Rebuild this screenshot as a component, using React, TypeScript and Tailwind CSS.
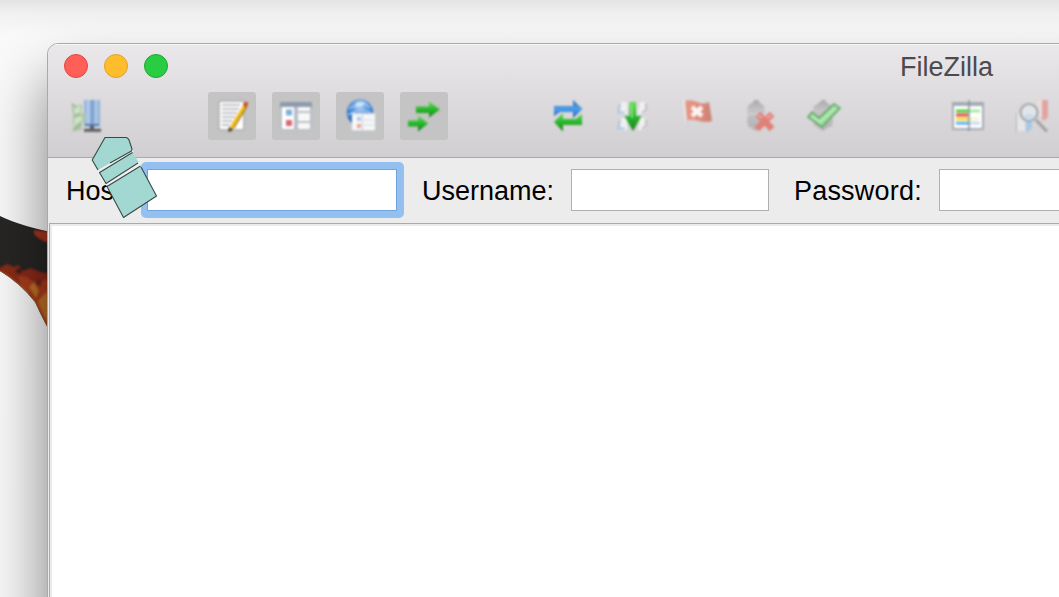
import type { ReactNode } from "react";

function Tool({ label, active = false, children }: { label: string; active?: boolean; children?: ReactNode }) {
  return (
    <button
      aria-label={label}
      className={active ? "h-12 w-12 shrink-0 rounded-[3px] bg-[#c4c4c4]" : "h-12 w-12 shrink-0"}
    >
      <svg viewBox="0 0 48 48" className="h-12 w-12 blur-[0.9px]">
        {children}
      </svg>
    </button>
  );
}

function Gap() {
  return <div className="w-16 shrink-0" />;
}

function Gradients() {
  return (
    <svg className="absolute h-0 w-0">
      <defs>
        <linearGradient id="green" x1="0" y1="0" x2="0" y2="1">
          <stop offset="0" stopColor="#5fdc50" />
          <stop offset="0.5" stopColor="#27b82b" />
          <stop offset="1" stopColor="#1d7d20" />
        </linearGradient>
        <linearGradient id="blue" x1="0" y1="0" x2="0" y2="1">
          <stop offset="0" stopColor="#3c6da8" />
          <stop offset="0.5" stopColor="#4c9ff0" />
          <stop offset="1" stopColor="#255e9e" />
        </linearGradient>
        <linearGradient id="server" x1="0" y1="0" x2="1" y2="0">
          <stop offset="0" stopColor="#8bacd6" />
          <stop offset="0.3" stopColor="#b9d2ef" />
          <stop offset="0.5" stopColor="#6f97c8" />
          <stop offset="0.75" stopColor="#b3cdec" />
          <stop offset="1" stopColor="#86a9d4" />
        </linearGradient>
        <linearGradient id="flag" x1="0" y1="0" x2="1" y2="0">
          <stop offset="0" stopColor="#e89886" />
          <stop offset="0.6" stopColor="#dd8b7b" />
          <stop offset="1" stopColor="#c98075" />
        </linearGradient>
        <linearGradient id="gear" x1="0" y1="0" x2="0" y2="1">
          <stop offset="0" stopColor="#aaa8aa" />
          <stop offset="0.35" stopColor="#c6c5c6" />
          <stop offset="1" stopColor="#b2b0b0" />
        </linearGradient>
        <radialGradient id="globe" cx="0.5" cy="0.25" r="0.75">
          <stop offset="0" stopColor="#b6d7f8" />
          <stop offset="0.45" stopColor="#4f8ddb" />
          <stop offset="1" stopColor="#2360b4" />
        </radialGradient>
      </defs>
    </svg>
  );
}

function Toolbar() {
  return (
    <div className="flex h-12 gap-4 pl-4">
      <Tool label="Site Manager">
        <rect x="20" y="8" width="16" height="26" fill="url(#server)" />
        <path d="M21 33h14" stroke="#4e78ad" strokeWidth="2" />
        <path d="M28 34v4" stroke="#5a5d61" strokeWidth="4" />
        <path d="M20 38.3h17" stroke="#606062" strokeWidth="3.2" />
        <path d="M8 11l4 3 6-2v4l-1 5 5 1v6l-4 2v8l-6 1-4 1 2-7-2-5 2-4-2-5z" fill="#b0c9a8" />
        <path d="M10 15l6-1v6l-5 3zM10 27l7-3 1 4-7 5z" fill="#d0e3ca" />
        <path d="M8 12l5 4M9 24l6-2M10 38l7-6" stroke="#8fae88" strokeWidth="1.2" fill="none" />
      </Tool>
      <Gap />
      <Tool label="Message log" active>
        <rect x="10.5" y="8.5" width="26" height="30" fill="#b4b4b7" />
        <rect x="12" y="10" width="23" height="27" fill="#fff" />
        <path d="M14 13h18M14 17h17M14 21h15M14 25h13M14 29h10M14 33h8" stroke="#bfc1c8" strokeWidth="1.9" />
        <path d="M36 12l4 2-14 22-4 3 1-6z" fill="#f5bb10" />
        <path d="M39 14L26 36" stroke="#8a7530" strokeWidth="1.2" />
        <path d="M35 13l2-3h3v2l-2 4z" fill="#c8512c" />
        <path d="M21 35l4 2-2 2.5h-3z" fill="#4b4234" />
      </Tool>
      <Tool label="Local tree" active>
        <rect x="8" y="10" width="32" height="28" fill="#b8bec6" />
        <path d="M8 10h32v5H8z" fill="#8e9bad" />
        <path d="M10 15h12v22H10z" fill="#fff" />
        <path d="M26 15h12v4H26zM26 21h12v8H26zM26 31h12v6H26z" fill="#f8f8f8" />
        <path d="M14 17.5h6v6h-6z" fill="#7cb0dc" />
        <path d="M14 28h6v6h-6z" fill="#dc6674" />
      </Tool>
      <Tool label="Remote tree" active>
        <circle cx="24" cy="20.5" r="13.2" fill="url(#globe)" />
        <path d="M13 17q4-4 7-2l5-1 4-3 5 5M12 23q10-7 23-3" stroke="#b2d3f4" strokeWidth="1.2" fill="none" />
        <path d="M19 12q5-4 10-1l-4 3h-5z" fill="#d1e6f8" />
        <rect x="16" y="21" width="23" height="18" fill="#f7f8fa" />
        <path d="M16 22h23M26.5 22v17M28 28h10M28 33h10M16 38.5h23" stroke="#cfd3da" strokeWidth="1.2" />
        <path d="M21 25h4v4h-4z" fill="#a9cde7" />
        <path d="M21 32h4v4h-4z" fill="#eda09a" />
      </Tool>
      <Tool label="Transfer queue" active>
        <path d="M16 14.5h13V9.5l11 8L29 25.5v-4.5H16z" fill="url(#green)" />
        <path d="M8 28.5h10v-5l10 8L18 39.5v-5H8z" fill="url(#green)" />
      </Tool>
      <Gap />
      <Tool label="Refresh">
        <path d="M10 24V14h19V8l9.5 9L29 26v-6H16z" fill="url(#blue)" />
        <path d="M38 22v11H19v6.5L10 30l9-9v6h13z" fill="url(#green)" />
      </Tool>
      <Tool label="Process queue">
        <path d="M13 10h6v12h-9v-4zM32 10h7v8l-3 4h-6zM13 26h6v12h-9v-4zM32 26h7v8l-3 4h-6z" fill="#f0f0f2" />
        <path d="M12 12l-1.5 8.5h6M12 28l-1.5 8.5h6" stroke="#a9c1df" strokeWidth="2" fill="none" />
        <path d="M38 11v7l-4 3M38 27v7l-4 3" stroke="#bab9bd" strokeWidth="1.7" fill="none" />
        <path d="M21.5 10h6.5v14h5.5l-8.5 15-8.5-15h5z" fill="url(#green)" />
        <path d="M23 12h2v14h-2z" fill="#8bdc7d" />
      </Tool>
      <Tool label="Cancel">
        <path d="M11 8h2.5v6L15 38h-1z" fill="#ebebec" />
        <path d="M14.5 28v9" stroke="#cccbcd" strokeWidth="1" />
        <path d="M13 9q6-2 12 1t12 0l3 19q-7 2-13 0t-12-1z" fill="url(#flag)" />
        <path d="M20 15l10 9M30 15l-10 9" stroke="#faf4f3" strokeWidth="4.5" />
      </Tool>
      <Tool label="Disconnect">
        <path d="M17 10l2-2h3l2 3 4 3 1 7-2 2 2 4-1 7-5 3-3 2-3-2-5-3-1-6 1-5-1-3 1-6z" fill="url(#gear)" />
        <path d="M12 22h14" stroke="#d3d1d2" strokeWidth="1.5" />
        <path d="M22 22l14 15M36 22L21 37" stroke="#e08078" strokeWidth="6.5" />
        <path d="M22 23l4 3M35 23l-4 3" stroke="#edaaa4" strokeWidth="2" />
      </Tool>
      <Tool label="Reconnect">
        <path d="M22 8h3l2 3 5 3 1 6-2 4 2 3-1 7-5 2-4 3-4-3-5-3-1-7 1-3-1-3 1-6 5-3z" fill="url(#gear)" />
        <path d="M8 25l4-5 7 6L34 12l6 4-18 19z" fill="#98dc9a" stroke="#5da062" strokeWidth="1.4" />
        <path d="M12 24l8 6 15-14" stroke="#bbecb9" strokeWidth="2" fill="none" />
      </Tool>
      <Gap />
      <Tool label="Filter">
        <rect x="8" y="10" width="32" height="28" fill="#a5abb5" />
        <rect x="10" y="14" width="28" height="22" fill="#fff" />
        <path d="M12 19h13" stroke="#4cd239" strokeWidth="3" />
        <path d="M26 19h10" stroke="#a3eda4" strokeWidth="3" />
        <path d="M12 23h12" stroke="#e5504c" strokeWidth="3" />
        <path d="M12 27h13" stroke="#ecdc3c" strokeWidth="3" />
        <path d="M26 27h9" stroke="#f9f6d2" strokeWidth="4" />
        <path d="M12 31.2h13" stroke="#5aaaf2" strokeWidth="2.7" />
        <path d="M26 31.2h10" stroke="#c1daf7" strokeWidth="2.7" />
        <path d="M25 8v31" stroke="#87919f" strokeWidth="1.5" />
      </Tool>
      <Tool label="Find files">
        <path d="M8 21h6l3 8v10H8z" fill="#e6e6e8" />
        <path d="M8.5 21v19" stroke="#b3b2b4" />
        <path d="M29 9l5-1 2 18-5-2z" fill="#ebdddd" />
        <path d="M34 8h6v17l-3 3h-3z" fill="#e2a4a3" />
        <path d="M18 29l6 1v6l-4 4h-2z" fill="#a4cae6" />
        <circle cx="21" cy="20.5" r="8.5" fill="#e2e6eb" stroke="#a5a5a8" strokeWidth="2.2" />
        <path d="M14 24q6-5 14 0-6 7-14 0z" fill="#cadceb" />
        <path d="M28 28l11 11.5" stroke="#a09fa2" strokeWidth="3" />
      </Tool>
    </div>
  );
}

function Lights() {
  return (
    <div className="flex gap-4 pl-4">
      <div className="h-6 w-6 rounded-full border border-[#e2463f] bg-[#ff5f57]" />
      <div className="h-6 w-6 rounded-full border border-[#e0a023] bg-[#ffbd2e]" />
      <div className="h-6 w-6 rounded-full border border-[#1fa82f] bg-[#28cd41]" />
    </div>
  );
}

function QuickConnect() {
  return (
    <div className="flex h-[65px] items-center bg-[#ececec] pb-px text-[27px] leading-none text-black">
      <label className="w-[93px] shrink-0 pt-[3px] pl-[18px]">Host:</label>
      <div className="h-14 w-[263px] shrink-0 rounded-[5px] bg-[#94c0f1] px-1.5 py-[7px]">
        <input aria-label="Host" className="block h-[42px] w-[250px] border border-[#6fa5dc] bg-white outline-none" />
      </div>
      <label className="w-[167px] shrink-0 pt-[3px] pl-[18px]">Username:</label>
      <input aria-label="Username" className="h-[42px] w-[198px] shrink-0 border border-[#b0b0b0] bg-white" />
      <label className="w-[170px] shrink-0 pt-[3px] pl-[25px] tracking-[0.2px]">Password:</label>
      <input aria-label="Password" className="h-[42px] w-[198px] shrink-0 border border-[#b0b0b0] bg-white" />
    </div>
  );
}

export default function App() {
  return (
    <div className="relative h-[597px] w-[1059px] overflow-hidden bg-[linear-gradient(180deg,#e3e3e3_0px,#f1f1f1_14px,#fafafa_35px,#f9f9f9_100%)] pt-[43px] pl-[47px] font-['Liberation_Sans',sans-serif]">
      <Gradients />
      <svg viewBox="0 0 60 160" className="absolute top-[190px] left-0 h-40 w-[60px]">
        <defs>
          <clipPath id="band">
            <path d="M0 26Q20 36 60 44V160Q44 132 35 112 20 93 0 81z" />
          </clipPath>
        </defs>
        <g clipPath="url(#band)">
          <rect width="60" height="160" fill="#272624" />
          <g className="blur-[1.2px]">
            <path d="M-4 80l11-6 7 3 4-2 5 6 8-3 9 4 20 3v80H40z" fill="#8a2a18" />
            <path d="M34 40l20 2v11q-12 0-20-9z" fill="#a8361d" />
            <path d="M18 86l9 1 8 6 10-3 15 1v69H44z" fill="#a93c1c" />
            <path d="M29 97l5-5 5 9-3 7zM38 111l9-10 8 42q-13-18-17-32z" fill="#bf7226" />
            <path d="M37 88l5 3-2 6-4-3zM28 103l4 3-1 4z" fill="#6f2517" />
            <path d="M15 80l6-2 1 4-4 2z" fill="#3a1f19" />
            <path d="M0 82Q20 93 34 112L48 142" stroke="#a58425" strokeWidth="1.5" fill="none" />
          </g>
        </g>
      </svg>
      <div className="relative h-[700px] w-[1900px] overflow-hidden rounded-tl-[11px] border border-[#aaa9aa] bg-[#ececec] shadow-[0_38px_62px_rgba(0,0,0,0.5)]">
        <header className="relative h-[114px] border-b border-[#aaa8aa] bg-linear-to-b from-[#eae8ea] to-[#d0ced0] pt-[10px] shadow-[inset_0_1px_0_#f8f7f8]">
          <Lights />
          <div className="absolute top-[7px] left-[852px] text-[27px] leading-[32px] text-[#4c4a4c]">FileZilla</div>
          <div className="pt-[14px]">
            <Toolbar />
          </div>
        </header>
        <QuickConnect />
        <main className="ml-px h-[520px] border-t border-l border-[#aaa] bg-white shadow-[inset_2px_2px_0_#ebebeb]" />
      </div>
      <svg viewBox="0 0 80 90" className="absolute top-[132px] left-[84px] h-[90px] w-20">
        <path d="M15 39L49 18M22 53L56 32" stroke="#f1f1f1" strokeWidth="3" />
        <g fill="#a2d8d1">
          <path d="M21 5.5h21q2 .2 3 2.5l3 9-.5 2L14 38 8.2 28z" />
          <path d="M15.5 40.5L48.5 20.5 54.5 30 22 51.5z" />
          <path d="M23 54.5L56.5 34 72.5 64 39.5 85.5z" />
        </g>
        <g fill="none" stroke="#384947" strokeWidth="1.1" strokeLinejoin="round">
          <path d="M14 38L8.2 28 21 5.5h21q2 .2 3 2.5l3 9-.5 2L26 31" />
          <path d="M48.5 20.5l-33 20L22 51.5 54 31" />
          <path d="M56.5 34L23 54.5l16.5 31L72.5 64 57 35" />
        </g>
      </svg>
    </div>
  );
}
